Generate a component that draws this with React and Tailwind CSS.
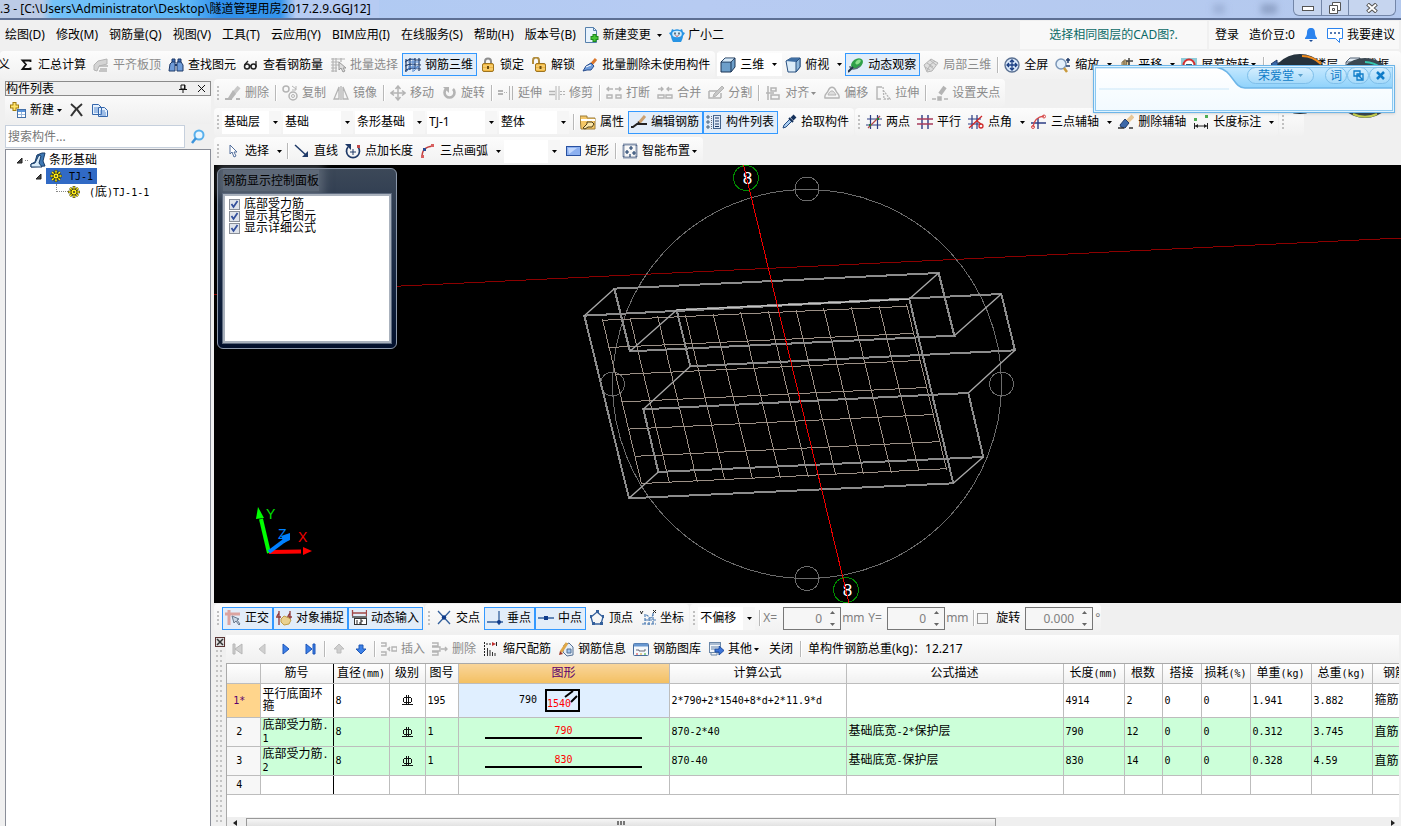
import React from "react";

const N = "#1f3a68";
const G = "#b4b4b4";

function Svg({ children, w = 16 }) {
  return (
    <svg width={w} height="16" viewBox={`0 0 ${w} 16`} fill="none" aria-hidden="true" className="shrink-0">
      {children}
    </svg>
  );
}

function Arrow() {
  return (
    <svg width="5" height="3" viewBox="0 0 5 3" aria-hidden="true" className="shrink-0 fill-current">
      <path d="M0 0h5L2.500 3z" />
    </svg>
  );
}

const icons = {
  sum: <path d="M12.5 5V3.500H4.500l3.500 4-3.500 4.500h8v-1.500" stroke="#111" strokeWidth="1.800" />,
  slab: <><path d="M1 8l4-4 9-2v5l-8 2-2 5-3-1z" fill="#d4d4d4" stroke={G} /><path d="M6 9h9M7 12h7M6 14h8" stroke={G} strokeWidth="1.500" /></>,
  binoc: <><path d="M4 2h3v4H4zM10 2h3v4h-3z" fill="#3c6cb4" stroke={N} /><path d="M2 7l2-2h3v9H1zM9 5h4l2 3v6H9z" fill="#6f9cd8" stroke={N} /><path d="M7 8h2" stroke={N} strokeWidth="2" /></>,
  glasses: <><circle cx="4" cy="9.500" r="2.500" stroke="#222" strokeWidth="1.500" /><circle cx="10.500" cy="9.500" r="2.500" stroke="#222" strokeWidth="1.500" /><path d="M6.500 9h1.500M1.500 8l3.500-4M13 10V4" stroke="#222" strokeWidth="1.300" /></>,
  batch: <><path d="M1 2h14M1 5h8M1 8h8M1 11h6M1 14h6M3 1v14M6 1v14M11 1v4" stroke={G} strokeWidth="1.200" /><path d="M9 5v8l2-2 2 4 2-1-2-3h3z" fill="#ddd" stroke="#999" /></>,
  rebar3d: <><path d="M0 5l5-3 11 1M0 9l5-2 11 1M0 14l5-3 11 1M1 2v13M5 1v12M10 1v11M14 1v13" stroke={N} strokeWidth="1.200" /><path d="M8 2v13M3 5h11M3 10h11M2 14l4-5M9 14l4-5" stroke="#4d80c8" /></>,
  lock: <><path d="M5 7V4.500a3 3 0 016 0V7" stroke="#8d8d8d" strokeWidth="2" /><rect x="2.500" y="6.500" width="11" height="8" rx="1.500" fill="#f1b842" stroke="#9d7420" /><path d="M3 9h10M3 12h10" stroke="#fbdf96" /><path d="M8 9v3" stroke="#6b4a0c" strokeWidth="2" /></>,
  unlock: <><path d="M2 7V3.500a3 3 0 016 0V6" stroke="#b18c3c" strokeWidth="2" /><rect x="4.500" y="6.500" width="10" height="8" rx="1.500" fill="#f1b842" stroke="#9d7420" /><path d="M5 9h9M5 12h9" stroke="#fbdf96" /><path d="M9.500 9v3" stroke="#6b4a0c" strokeWidth="2" /></>,
  brush: <><path d="M14 2L8 9" stroke="#d9772c" strokeWidth="3" /><path d="M9 6l3 3-3 4H5l-4 1 3-5z" fill="#6c9bdc" stroke="#284c8c" /><path d="M4 10l5-2" stroke="#fff" /></>,
  brush2: <><path d="M15 2L9 8" stroke="#e8c898" strokeWidth="4" /><path d="M7 5l4 4-4 5-4-1-1-2z" fill="#3c68a8" stroke={N} /><path d="M0 14h6M11 14h4" stroke="#333" strokeWidth="1.500" /></>,
  grayBrush: <><path d="M14 2L9 8" stroke="#c8c8c8" strokeWidth="4" /><path d="M8 5l3 4-4 5-4-1z" fill="#b7b7b7" /><path d="M0 14h7M11 14h4" stroke={G} strokeWidth="2" /></>,
  cube: <><path d="M1 5l4-4h10v9l-4 5H1z" fill="#6d9fca" stroke="#1c3454" /><path d="M1 5h10v10M11 5l4-4" stroke="#1c3454" /><path d="M2 4.500L5 1.500h9l-3 3z" fill="#d6e8f6" /></>,
  topCube: <><path d="M1 4l5-3h9v9l-4 5H3z" fill="#dcecf8" stroke="#285080" /><path d="M1 4l5-3h9l-4 4z" fill="#3f6fa4" /><path d="M11 5l4-4v9l-4 5z" fill="#8fb8dc" stroke="#285080" /></>,
  orbit: <><ellipse cx="9" cy="6.500" rx="6.500" ry="4.500" fill="#2fa048" transform="rotate(-35 9 6.500)" /><ellipse cx="10" cy="5" rx="3" ry="1.800" fill="#8ae08c" transform="rotate(-35 10 5)" /><path d="M2 9c0 4 6 4 10 0" stroke="#5c6c7c" strokeWidth="1.500" /><path d="M0 15l5-5" stroke="#24364c" strokeWidth="2" /></>,
  local3d: <><path d="M1 8l7-6 7 4-6 8-5 1z" fill="#dedede" stroke={G} /><path d="M4 6l6 4M7 3l6 5M4 14l3-6 5-4M2 10l5 3M11 12l-4-3" stroke={G} /></>,
  full: <><circle cx="8" cy="8" r="7" fill="#dbe9fa" stroke="#5b7192" strokeWidth="1.400" /><path d="M8 3v10M3 8h10M6 5l2-2 2 2M6 11l2 2 2-2M5 6L3 8l2 2M11 6l2 2-2 2" stroke="#1b3f84" strokeWidth="1.300" /></>,
  zoom: <><circle cx="6" cy="7" r="5" fill="#e4f0fb" stroke="#7c97b8" strokeWidth="1.500" /><path d="M9 11l3 4" stroke="#c99a3c" strokeWidth="2.500" /><path d="M13 1v5M11 3h4M11 9h4" stroke={N} strokeWidth="1.500" /></>,
  pan: <><path d="M3 14L1 9l3 1V5l2-1v4-5h2v5l1-4 2 1v6l-2 5z" fill="#ead09c" stroke="#7c6c4c" /><path d="M11 1v7M8 4h7" stroke="#444" strokeWidth="1.500" /></>,
  rotScreen: <><rect x="0" y="1" width="16" height="14" fill="#90cbd8" /><circle cx="8" cy="8" r="5.500" fill="#fff" stroke="#d23030" strokeWidth="2" /><path d="M5 8h6" stroke="#367" strokeWidth="2" /></>,
  floor: <path d="M1 7l6-4v3h8v3H7v3z" fill="#3867a8" stroke={N} />,
  wire: <><path d="M1 5l4-4h10v9l-4 5H1z" fill="#e2eaf2" stroke="#526274" /><path d="M1 5h10v10M11 5l4-4" stroke="#526274" /></>,
  copyG: <><circle cx="4" cy="4" r="3" stroke={G} strokeWidth="1.500" /><circle cx="11" cy="11" r="4" stroke={G} strokeWidth="1.500" /><circle cx="11" cy="11" r="1.500" stroke={G} /><path d="M10 1l4 3M14 1v4h-4" stroke={G} /></>,
  mirror: <path d="M6 2v12H1zM10 2v12h5zM8 1v14" stroke={G} strokeWidth="1.300" />,
  move: <path d="M8 1v14M1 8h14M5.500 4L8 1l2.500 3M5.500 12L8 15l2.500-3M4 5.500L1 8l3 2.500M12 5.500L15 8l-3 2.500" stroke={G} strokeWidth="1.500" />,
  rotate: <><path d="M5 4a5 5 0 107 0" stroke={G} strokeWidth="2.600" /><path d="M2 2h6v6z" fill={G} /></>,
  extend: <><path d="M0 6h5M0 9h5" stroke={G} strokeWidth="2" /><path d="M6 7.500h4" stroke={G} strokeDasharray="1 1" /><path d="M11.500 1v14M14.500 1v14" stroke={G} /></>,
  trim: <><path d="M7 1v14M10 1v14" stroke={G} /><path d="M0 6.500h6M0 9.500h6" stroke={G} strokeWidth="1.500" /><path d="M11 6.500h5M11 9.500h5" stroke={G} strokeDasharray="2 1" /></>,
  split1: <path d="M1 4h6M9 4h6M3 2L1 4l2 2M13 2l2 2-2 2M1 10h5v3H1zM10 10h5v3h-5z" stroke={G} strokeWidth="1.400" />,
  merge: <path d="M1 4h5M10 4h5M4 2l2 2-2 2M12 2l-2 2 2 2M1 10h6v3H1zM9 10h6v3H9z" stroke={G} strokeWidth="1.400" />,
  divide: <><path d="M1 6h9M1 6v7h12M13 8v5" stroke={G} strokeWidth="1.500" /><path d="M14 1l2 2-8 8-3 1 1-3z" fill="#c8c8c8" stroke={G} /></>,
  align: <path d="M3 1v14M6 3h5v3H6zM6 10h8v4H6zM1 8h8" stroke={G} strokeWidth="1.500" />,
  offset: <><path d="M1 13c-1-4 2-4 3-7 2-5 6-5 8 0 1 3 4 3 3 7z" stroke={G} strokeWidth="1.400" /><path d="M4 10c1-3 2-3 3-4h2c1 1 2 2 3 4z" fill="#ddd" stroke={G} /></>,
  stretch: <><path d="M7 2H2v12h4" stroke={G} strokeWidth="1.400" /><path d="M8 2l1 12h6L8 5" stroke={G} strokeWidth="1.300" strokeDasharray="2 1" /></>,
  grip: <><path d="M13 2L8 9" stroke="#b4b4b4" strokeWidth="4" /><path d="M0 14h4M12 14h4M6 12h3v3H6z" stroke={G} fill={G} strokeWidth="1.500" /></>,
  prop: <><path d="M0 2h7v2h8v11H1z" fill="#f5c766" stroke="#9c7c38" /><path d="M1 6h14" stroke="#fff" strokeWidth="2" /><path d="M3 14l4-4V8h5l2 2-2 3H8l-3 2z" fill="#fbe6a8" stroke="#4c3c18" /></>,
  editBar: <><path d="M14 2L8 9" stroke="#caa070" strokeWidth="3" /><path d="M0 13h2l4-3h10" stroke="#222" strokeWidth="2" /><path d="M6 11l1-4 3 3z" fill="#222" /></>,
  list: <><path d="M1 2h2v2H1zM1 7h2v2H1zM1 12h2v2H1z" stroke="#45607c" /><path d="M5.500 2v13" stroke="#667" strokeDasharray="1 1" /><rect x="7.500" y="1.500" width="7" height="13" fill="#dfe9f6" stroke="#44658f" /><path d="M9 4h4M9 7h4M9 10h4M9 12.500h4" stroke={N} /></>,
  picker: <><path d="M2 14l1-3 6-6 2 2-6 6z" fill="#aacdf0" stroke="#234c84" /><path d="M8 4l4 4" stroke="#16325c" strokeWidth="2" /><path d="M14 2l-3 3" stroke="#16325c" strokeWidth="4" /></>,
  twoPt: <><path d="M4.500 1v14M11.500 1v14M0 11h15M1 5h15" stroke="#2c3c84" strokeWidth="1.200" /><path d="M2 14L14 2" stroke="#b04848" strokeWidth="1.300" /><path d="M11 4h2v2h-2zM3 10h2v2H3z" fill="#208030" /></>,
  para: <><path d="M5 1v14M11 1v14" stroke="#2c3c84" strokeWidth="1.400" /><path d="M0 5h16M0 10h16" stroke="#a83c5c" strokeWidth="1.400" /></>,
  angle: <><path d="M4 1v14M9 1v14M0 10h12M0 5h13" stroke="#2c3c84" strokeWidth="1.200" /><path d="M1 14L14 2M9 7l4 3" stroke="#d02828" strokeWidth="1.300" /><circle cx="13" cy="12" r="2" stroke="#d02828" strokeWidth="1.300" /></>,
  three: <><path d="M0 9h15M7 4v11" stroke="#2c3c84" strokeWidth="1.400" /><path d="M2 13C3 6 6 3 13 2" stroke="#d84848" strokeWidth="1.500" /><circle cx="13" cy="2.500" r="1.500" stroke="#d84848" /><circle cx="2" cy="13" r="1.500" stroke="#d84848" /></>,
  dim: <><path d="M1 4h3v3H1zM12 1h3v3h-3z" fill="#4fae55" /><path d="M1.500 9v6M14.500 9v6M2 12h12" stroke="#222" /><path d="M2 12l3-2v4zM14 12l-3-2v4z" fill="#222" /></>,
  cursor: <path d="M5 2v9l2-2 2 5 2-1-2-4h3z" fill="#fff" stroke="#536f9c" />,
  line: <><path d="M1 2l12 11" stroke={N} strokeWidth="1.500" /><path d="M14 14V8l-6 6z" fill={N} /></>,
  ptLen: <><path d="M3 4a6.500 6.500 0 1010 0" stroke={N} strokeWidth="1.700" /><path d="M0 1h6v6z" fill={N} /><path d="M8 6v6M5 9h6" stroke={N} /><path d="M12 2h3v3h-3z" fill="#c04848" /></>,
  arc: <><path d="M2 14C2 7 5 4 13 3" stroke="#c04040" strokeWidth="1.500" /><path d="M11 1h3v3h-3zM1 12h3v3H1z" fill="#d86060" /><path d="M3 5h3v3H3z" fill="#2c4c94" /></>,
  rect: <><rect x="1.500" y="3.500" width="14" height="9" fill="#8cb0f0" stroke="#2850a0" /><path d="M3 5h9l-8 6z" fill="#c0d6fc" /></>,
  smart: <><rect x="1.500" y="1.500" width="13" height="13" stroke={N} strokeDasharray="1 1" strokeWidth="2" /><path d="M9 3v4M7 5h4M5 7v4M3 9h4M12 8v4M10 10h4M8 11v3" stroke="#20406c" strokeWidth="1.200" /></>,
  ortho: <><path d="M0 4h15M4 0v15" stroke="#dba4a0" strokeWidth="3" /><path d="M7 6l2 7 2-2 3 4 1-1-3-4 2-1z" fill="#c8d6e4" stroke="#67788c" /></>,
  snap: <><path d="M3 1v14M14 1v8M0 7h5M11 7h5M3 3l-2 3M14 3l-2 3" stroke="#903838" strokeWidth="1.300" /><path d="M5 9l3-3 5 2 2 2-2 4-5 1-3-3z" fill="#ead290" stroke="#c09c48" /></>,
  dyn: <><path d="M1.500 0v6M15.500 0v6M1 3h14" stroke="#a04848" strokeWidth="1.300" /><path d="M1 7h15" stroke="#444" strokeWidth="1.500" /><rect x="3.500" y="8.500" width="12" height="6" fill="#fff" stroke="#333" /><path d="M6 10v4M9 10h2v2H9v2h2" stroke="#222" /></>,
  cross: <><path d="M2 1l12 13M14 1L2 14" stroke="#34609c" strokeWidth="1.300" /><circle cx="8" cy="7.500" r="2.200" fill="#103c8c" /></>,
  perp: <><path d="M12 1v14M0 12h16" stroke="#34609c" strokeWidth="1.300" /><circle cx="12" cy="12" r="2" fill="#103c8c" /></>,
  mid: <><path d="M0 8h16" stroke="#34609c" strokeWidth="1.500" /><rect x="6" y="6" width="4" height="4" fill="#103c8c" /></>,
  vertex: <><path d="M8 2l6 5-2 7H4L2 7z" stroke="#34609c" strokeWidth="1.300" /><path d="M7 0h3v3H7zM13 5h2v3h-2zM1 5h2v3H1zM3 12h3v3H3zM11 12h3v3h-3z" fill="#34609c" /></>,
  coord: <><path d="M5 4v10h11M2 14h3M5 10h11M9 8v7M13 3v12M6 5c3 0 2 3 4 3s3-3 3-4" stroke="#4c7cb4" strokeWidth="1.200" strokeDasharray="3 1" /><path d="M0 1l2 3M3 1L1 4M13 0l3 3M16 0l-3 3" stroke="#222" /></>,
  insert: <path d="M0 2h5v3H0M0 11h5v3H0M6 8h3M11 6h5v4h-5zM9 6L7 8l2 2" stroke={G} strokeWidth="1.400" />,
  del: <path d="M0 2h6v3H0M0 11h6v3H0M0 6h8v4H0M9 8h6M13 6l2 2-2 2" stroke={G} strokeWidth="1.400" />,
  scale: <><path d="M1.500 1v14M3 3h8" stroke="#222" strokeDasharray="2 1" /><path d="M9 1l4 2-4 2z" fill="#c03030" /><path d="M13.500 1v4" stroke="#222" /><path d="M4.500 7v8M7 9v6M9.500 11v4M12 12v3" stroke="#333" /></>,
  info: <><path d="M6 4l5-2 4 4v8l-6 1-4-4z" fill="#e3edf8" stroke="#557094" /><path d="M9 2L3 11" stroke="#e0a848" strokeWidth="3" /><path d="M1 14l1-4 3 3z" fill="#a03828" /><path d="M9 8h4v4H9z" fill="#a0c4ec" stroke="#557094" /></>,
  lib: <><rect x=".5" y="2.500" width="15" height="12" rx="1" fill="#f4f8fc" stroke="#486c9c" /><path d="M1 4h14" stroke="#6797d0" strokeWidth="3" /><path d="M3 9h3v1h6V8" stroke="#667" /><path d="M3 13h2" stroke="#d33" /><path d="M7 13h2" stroke="#da3" /><path d="M11 13h2" stroke="#3a3" /></>,
  other: <><rect x="1.500" y="1.500" width="11" height="10" fill="#f3f7fb" stroke="#6c88a8" /><path d="M1 3h12M3 6h7M3 8h4" stroke="#6080a8" /><path d="M3 11v3h6v-3" stroke="#6c88a8" /><path d="M7 8h4V5l5 4.500L11 14v-3H7z" fill="#3c74d8" stroke="#1c4ca0" /></>,
  newDoc: <><path d="M1.500.5h8l3 3v12h-11z" fill="#e8f3fd" stroke="#5680ac" /><path d="M9.500.5v3h3" stroke="#5680ac" /><path d="M10.500 7v8M6.500 11h8" stroke="#1d8a1d" strokeWidth="4" /><path d="M10.500 8v6M7.500 11h6" stroke="#46c436" strokeWidth="2" /></>,
  mascot: <><path d="M3 2l2 1c2-1 4-1 6 0l2-1 1 3 2 1-2 3c0 2-1 4-2 6H4C3 13 2 11 2 9L0 6l2-1z" fill="#2894e4" /><ellipse cx="8" cy="7" rx="4.800" ry="3.300" fill="#d2ecfc" /><path d="M6 5.500v2M10 5.500v2" stroke="#123" strokeWidth="1.200" /><path d="M6.500 8.500c1 1 2 1 3 0" stroke="#c44" /></>,
  first: <path d="M3 3h2v10H3zM12 3v10L5 8z" fill="#d0d0d0" stroke="#b6b6b6" />,
  prev: <path d="M11 3v10L5 8z" fill="#d0d0d0" stroke="#c0c0c0" />,
  next: <path d="M5 3v10l6-5z" fill="#3c80e8" stroke="#1c54b8" />,
  last: <path d="M4 3v10l6-5zM11 3h2v10h-2z" fill="#3c80e8" stroke="#1c54b8" />,
  up: <path d="M8 3l5 5h-3v4H6V8H3z" fill="#cfcfcf" stroke="#bdbdbd" />,
  down: <path d="M8 13l5-5h-3V4H6v4H3z" fill="#3c80e8" stroke="#2058b4" />,
};

function Tool({ icon, text, on, off, split, menu }) {
  return (
    <span className="flex shrink-0 items-center">
      <button
        type="button"
        disabled={off}
        className={
          "flex h-[23px] items-center gap-1 border pr-[3px] pl-[2px] whitespace-nowrap " +
          (on ? "border-[#3399ff] bg-[#e2edf9] " : "border-transparent ") +
          (off ? "text-[#8c8c8c]" : "text-black")
        }
      >
        <Svg>{icons[icon]}</Svg>
        <span>{text}</span>
        {menu && <span className="-ml-1 flex w-2 justify-center"><Arrow /></span>}
      </button>
      {split && (
        <button type="button" aria-label={text + " 选项"} className="flex h-[23px] w-3 items-center justify-center">
          <Arrow />
        </button>
      )}
    </span>
  );
}

const Sep = () => <span className="mx-[2px] h-4 w-[2px] shrink-0 border-l border-[#b8b8b8] bg-white" />;

const Grip = () => (
  <svg width="3" height="15" viewBox="0 0 3 15" aria-hidden="true" className="mr-[2px] ml-[3px] shrink-0">
    <path d="M0 0h2v2H0zM0 4h2v2H0zM0 8h2v2H0zM0 12h2v2H0z" fill="#c0c0c0" />
  </svg>
);

function Strip({ children, grow }) {
  return (
    <div className={"flex h-7 shrink-0 items-center rounded-sm bg-linear-to-b from-[#fcfcfc] to-[#f1f1f1] pr-[1px] " + (grow ? "grow" : "")}>
      {children}
    </div>
  );
}

function Combo({ label, value, wide = "w-[70px]" }) {
  return (
    <span className={"relative mr-[2px] flex h-[23px] shrink-0 items-center bg-white " + wide}>
      <select aria-label={label} defaultValue={value} className="h-full w-full appearance-none bg-white pl-[2px] text-xs text-black">
        <option>{value}</option>
      </select>
      <span className="pointer-events-none absolute inset-y-0 right-0 flex w-3 items-center justify-center bg-[#f6f6f6]"><Arrow /></span>
    </span>
  );
}

function Spin({ label, value, wide = "w-[58px]" }) {
  return (
    <span className={"flex h-[23px] shrink-0 items-center border border-[#777] bg-[#f6f6f6] " + wide}>
      <input aria-label={label} defaultValue={value} className="h-full w-full min-w-0 bg-transparent pr-[2px] text-right text-xs text-[#808080]" />
      <span className="flex h-full w-4 shrink-0 flex-col items-center justify-between py-[3px] text-[#666]">
        <svg width="5" height="3" viewBox="0 0 5 3" aria-hidden="true"><path d="M0 3h5L2.500 0z" fill="currentColor" /></svg>
        <svg width="5" height="3" viewBox="0 0 5 3" aria-hidden="true"><path d="M0 0h5L2.500 3z" fill="currentColor" /></svg>
      </span>
    </span>
  );
}

/* Latin runs sit in a narrow monospace beside full-width characters. */
function Mixed({ children }) {
  return children.split(/([\x20-\x7e]+)/).filter(Boolean).map((part, i) =>
    /^[\x20-\x7e]/.test(part)
      ? <span key={i} className="font-['DejaVu_Sans_Mono',monospace] text-[10px]">{part}</span>
      : part
  );
}

function TitleBar() {
  return (
    <header className="flex h-5 shrink-0 items-start justify-between border-b-2 border-[#5d6f93] bg-linear-to-r from-[#a9c9f3] via-[#b7cbf2] to-[#b4c9ee]">
      <h1 className="h-[18px] overflow-hidden bg-[linear-gradient(to_right,#bccbe6_11%,#74c2f8_14%,#5cb6f6_50%,#2f8eea_58%,#3494ec_74%,#b6cbf2_78%)] pr-2 text-xs leading-[18px] whitespace-nowrap">
        .3 - [C:\Users\Administrator\Desktop\隧道管理用房2017.2.9.GGJ12]
      </h1>
      <div className="flex items-start">
        <div aria-hidden="true" className="mr-4 flex gap-9 pt-1 blur-[3px]">
          <span className="h-[10px] w-3 bg-[#8a9ec4]/50" />
          <span className="h-[10px] w-4 bg-[#7688ae]/60" />
        </div>
        <div className="mr-[5px] flex h-4 rounded-b-md border border-t-0 border-[#7386a8] bg-[#c6d5ef]">
          <button type="button" aria-label="最小化" className="flex w-7 items-center justify-center border-r border-[#7386a8]">
            <svg width="12" height="6" viewBox="0 0 12 6"><rect x=".5" y="1.500" width="11" height="4" fill="#fff" stroke="#555" /></svg>
          </button>
          <button type="button" aria-label="还原" className="flex w-[27px] items-center justify-center border-r border-[#7386a8]">
            <svg width="12" height="12" viewBox="0 0 12 12" fill="#fff" stroke="#555"><path d="M3.500.5h8v8h-8z" /><path d="M.5 3.500h8v8h-8zM3.500 6.500h2v2h-2z" /></svg>
          </button>
          <button type="button" aria-label="关闭窗口" className="flex w-[46px] items-center justify-center">
            <svg width="12" height="10" viewBox="0 0 12 10"><path d="M1.500 1l9 8M10.500 1l-9 8" stroke="#555" strokeWidth="4" /><path d="M2 1.500l8 7M10 1.500l-8 7" stroke="#fff" strokeWidth="2" /></svg>
          </button>
        </div>
      </div>
    </header>
  );
}

const menus = ["绘图(D)", "修改(M)", "钢筋量(Q)", "视图(V)", "工具(T)", "云应用(Y)", "BIM应用(I)", "在线服务(S)", "帮助(H)", "版本号(B)"];

function MenuBar() {
  return (
    <nav className="flex h-[30px] shrink-0 items-center justify-between whitespace-nowrap">
      <div className="flex items-center pl-[5px]">
        <div className="flex gap-[11px]">
          {menus.map((m) => <button type="button" key={m}>{m}</button>)}
        </div>
        <div className="ml-2 flex items-center">
          <button type="button" className="flex items-center gap-[3px]"><Svg>{icons.newDoc}</Svg>新建变更</button>
          <button type="button" aria-label="新建变更 选项" className="flex w-[18px] justify-center"><Arrow /></button>
          <button type="button" className="flex items-center gap-[3px]"><Svg>{icons.mascot}</Svg>广小二</button>
        </div>
      </div>
      <div className="flex gap-[2px] pr-[2px]">
        <div className="flex h-7 w-[187px] items-center justify-center bg-[#f8f8f8] text-[#0b6a66]">选择相同图层的CAD图?.</div>
        <div className="flex h-7 items-center bg-[#f8f8f8] pr-1 pl-[6px]">
          <button type="button" className="mr-[10px]">登录</button>
          <button type="button" className="mr-2">造价豆:0</button>
          <button type="button" aria-label="通知" className="mr-2">
            <Svg><path d="M8 1c3 0 4 2 4 5 0 2 1 4 2 5v1H2v-1c1-1 2-3 2-5 0-3 1-5 4-5z" fill="#2b83ee" /><path d="M6 13h4l-2 2z" fill="#1b4c98" /></Svg>
          </button>
          <button type="button" className="flex items-center gap-1">
            <Svg><path d="M.5 1.500h15v10h-3v4l-4-4h-8z" stroke="#2b83ee" fill="#fff" /><path d="M3 6h2M7 6h2M11 6h2" stroke="#1b4c98" strokeWidth="1.500" /></Svg>
            我要建议
          </button>
        </div>
      </div>
    </nav>
  );
}

function MainTools() {
  return (
    <div className="flex h-[29px] shrink-0 items-center gap-[2px] overflow-hidden">
      <Strip>
        <button type="button" className="-ml-[2px] w-[17px] text-left">义</button>
        <Tool icon="sum" text="汇总计算" />
        <Tool icon="slab" text="平齐板顶" off />
        <Tool icon="binoc" text="查找图元" />
        <Tool icon="glasses" text="查看钢筋量" />
        <Tool icon="batch" text="批量选择" off />
        <Tool icon="rebar3d" text="钢筋三维" on />
        <Tool icon="lock" text="锁定" />
        <Tool icon="unlock" text="解锁" />
        <Tool icon="brush" text="批量删除未使用构件" />
      </Strip>
      <Strip grow>
        <span className="flex bg-white pr-[2px]"><Tool icon="cube" text="三维" split /></span>
        <Tool icon="topCube" text="俯视" split />
        <Tool icon="orbit" text="动态观察" on />
        <Tool icon="local3d" text="局部三维" off />
        <Sep />
        <Tool icon="full" text="全屏" />
        <Tool icon="zoom" text="缩放" split />
        <Tool icon="pan" text="平移" split />
        <Tool icon="rotScreen" text="屏幕旋转" menu />
        <Sep />
        <Tool icon="floor" text="选择楼层" />
        <Tool icon="wire" text="线框" />
      </Strip>
    </div>
  );
}

function Sun() {
  return (
    <svg width="12" height="12" viewBox="0 0 12 12" aria-hidden="true" className="shrink-0">
      <path d="M6 0v12M0 6h12M2 2l8 8M10 2l-8 8" stroke="#2a2a00" strokeWidth="2.600" />
      <path d="M6 .5v11M.5 6h11M2 2l8 8M10 2l-8 8" stroke="#ffee20" strokeWidth="1.500" />
      <circle cx="6" cy="6" r="3" fill="#ffee20" stroke="#555000" />
      <circle cx="6" cy="6" r="1" fill="#333" />
    </svg>
  );
}

const Twisty = () => (
  <svg width="7" height="7" viewBox="0 0 7 7" aria-hidden="true" className="shrink-0"><path d="M6 1v5H1z" fill="#444" stroke="#222" /></svg>
);

function ComponentList() {
  return (
    <aside className="flex w-[211px] shrink-0 flex-col pt-[2px] pl-[5px]">
      <div className="flex h-[15px] items-center justify-between border border-[#8a8a8a] bg-[#efefef]">
        <h2 className="text-xs leading-3">构件列表</h2>
        <div className="flex items-center gap-[10px] pr-1">
          <button type="button" aria-label="固定"><svg width="8" height="9" viewBox="0 0 8 9"><path d="M2 1h4v4H2zM0 5.500h8M4 6v3M5.500 1v4" fill="none" stroke="#111" /></svg></button>
          <button type="button" aria-label="关闭列表"><svg width="9" height="9" viewBox="0 0 9 9"><path d="M1 1l7 7M8 1L1 8" stroke="#111" /></svg></button>
        </div>
      </div>
      <div className="flex h-7 items-center bg-linear-to-b from-[#fafafa] to-[#efefef] pl-[5px]">
        <button type="button" className="flex items-center gap-1">
          <Svg><path d="M4.500 0v9M0 4.500h9" stroke="#a07c10" strokeWidth="4" /><path d="M4.500 1v7M1 4.500h7" stroke="#ffe46a" strokeWidth="2" /><rect x="7.500" y="7.500" width="8" height="8" fill="#fff" stroke="#4470a8" /><path d="M8 9h7" stroke="#5a94dc" strokeWidth="2" /><path d="M8 12.500h7M11.500 10v5" stroke="#9ab8dc" /></Svg>
          新建
          <span className="-ml-[1px]"><Arrow /></span>
        </button>
        <button type="button" aria-label="删除构件" className="ml-[7px]"><Svg><path d="M2 2c4 3 8 7 11 12M13 2C9 5 5 9 2 14" stroke="#333" strokeWidth="2" /></Svg></button>
        <button type="button" aria-label="复制构件" className="ml-[7px]"><Svg><path d="M.5 2.500h6l3 3v7h-9zM6.500 5.500h6l3 3v6h-9z" fill="#e6f1fd" stroke="#3466ac" /><path d="M2 6h4M2 8h4M2 10h4M8 9h5M8 11h6M8 13h6" stroke="#5a8cd0" /></Svg></button>
      </div>
      <div className="flex h-[25px] items-center">
        <input aria-label="搜索构件" placeholder="搜索构件..." className="h-[23px] w-0 grow border border-[#c6d0dd] bg-white pl-[2px] text-xs placeholder:text-[#777]" />
        <button type="button" aria-label="搜索" className="flex w-[26px] justify-center"><Svg><circle cx="9" cy="6" r="4.500" fill="#e8f6ff" stroke="#58b0ec" strokeWidth="2" /><path d="M6 9l-4 5" stroke="#3c94dc" strokeWidth="2.500" /></Svg></button>
      </div>
      <div className="grow border border-b-0 border-[#8a8e98] bg-white pt-[2px]">
        <div className="flex h-4 items-center pl-[10px]">
          <Twisty />
          <span className="mx-[2px] w-[3px] border-t border-dotted border-[#888]" />
          <Svg><path d="M1 15v-3l4-2 2-7 5-2h3l-2 8 2 5z" fill="#3e78b4" stroke="#183c68" /><path d="M1 15v-3l4-1 4-8 2 1-2 7 3 4z" fill="#d8ebf8" stroke="#183c68" /></Svg>
          <span className="ml-[3px]">条形基础</span>
        </div>
        <div className="flex h-4 items-center pl-[29px]">
          <Twisty />
          <span className="ml-1 flex h-4 w-[51px] items-center gap-[7px] bg-[#316ac5] pl-1"><Sun /><span><Mixed>TJ-1</Mixed></span></span>
        </div>
        <div className="flex h-4 items-center pl-[50px]">
          <span className="h-2 w-3 self-start border-b border-l border-dotted border-[#888]" />
          <Sun />
          <span className="ml-[9px]"><Mixed>(底)TJ-1-1</Mixed></span>
        </div>
      </div>
    </aside>
  );
}

const rows12 = Array.from({ length: 12 }, (_, i) => i);
const rows7 = rows12.slice(0, 7);

function Scene() {
  return (
    <svg viewBox="214 165 1187 438" preserveAspectRatio="xMidYMid slice" className="absolute inset-0 h-full w-full" role="img" aria-label="钢筋三维">
      <g fill="none" shapeRendering="crispEdges">
        <path d="M214 295L1401 238" stroke="#8c0000" />
        <circle cx="807" cy="384" r="194.500" stroke="#6c6c6c" />
        <g stroke="#6c6c6c">
          <circle cx="807" cy="189" r="12" /><circle cx="807" cy="578.500" r="12" />
          <circle cx="612.500" cy="384" r="12" /><circle cx="1001.500" cy="384" r="12" />
        </g>
      </g>
      <g transform="translate(570 165) scale(.3333)" fill="none">
        <g stroke="#9c9086" strokeWidth="3" shapeRendering="crispEdges">
          {rows12.map((i) => <path key={i} d={`M${97 + 83 * i} ${462 - 4 * i}L${215 + 83.2 * i} ${958 - 3.9 * i}`} />)}
          {rows7.map((i) => <path key={i} d={`M${95 + 20 * i} ${466 + 81.6 * i}L${1012 + 19.4 * i} ${424 + 81.2 * i}`} />)}
        </g>
        <g stroke="#8c8c8c" strokeWidth="6" shapeRendering="crispEdges">
          <path d="M43 452L1018 402L1150 955L177 1000Z" />
          <path d="M133 371L1106 324L1153 512L180 559Z" />
          <path d="M320 435L1294 387L1335 556L361 604Z" />
          <path d="M220 733L1195 684L1240 876L265 921Z" />
        </g>
        <path d="M43 452L133 371M1018 402L1106 324M180 559L320 435M1153 512L1294 387M361 604L220 733M1335 556L1195 684M265 921L177 1000M1240 876L1150 955" stroke="#a8a8a8" strokeWidth="4" />
        <path d="M320 435L1018 402" stroke="#c4c4c4" strokeWidth="3" shapeRendering="crispEdges" />
      </g>
      <g fill="#fff" fontFamily="'Liberation Sans', sans-serif" fontSize="17" textAnchor="middle">
        <text x="747.500" y="184">8</text>
        <text x="847.500" y="596">8</text>
      </g>
      <g fill="none" stroke="#008c00" shapeRendering="crispEdges"><circle cx="746" cy="178" r="12.500" /><circle cx="846" cy="590" r="12.500" /></g>
      <path d="M743.500 165L849 603" stroke="#f00000" shapeRendering="crispEdges" />
      <path d="M269 553L261 519" stroke="#00ff00" strokeWidth="4" /><path d="M258 507L264 518L256 519Z" fill="#00ff00" />
      <path d="M269 552L301 551.500" stroke="#ff0000" strokeWidth="4" /><path d="M303 547L312 551L303 555Z" fill="#ff0000" />
      <path d="M269 552L285 540" stroke="#0080ff" strokeWidth="4" /><path d="M281 536L290 533V540L284 543Z" fill="#0080ff" />
      <g fontFamily="'Liberation Sans', sans-serif" fontSize="14">
        <text x="266" y="519" fill="#00e000">Y</text>
        <text x="278" y="539" fill="#0080ff">Z</text>
        <text x="298" y="542" fill="#f00000">X</text>
      </g>
    </svg>
  );
}

const checks = ["底部受力筋", "显示其它图元", "显示详细公式"];

function Viewport() {
  return (
    <main className="relative min-h-0 grow overflow-hidden bg-black">
      <Scene />
      <section className="absolute top-[3px] left-[3px] flex h-[181px] w-[180px] flex-col rounded-md border border-[#8d99ab] bg-linear-to-b from-[#3c4858] via-[#1b2b45] to-[#03102c] p-[5px] pt-0">
        <h2 className="h-[25px] text-xs leading-6"><span className="bg-[#77818e]/60 py-[2px] text-black shadow-[0_0_8px_5px_rgba(119,129,142,0.5)]">钢筋显示控制面板</span></h2>
        <div className="grow border-2 border-double border-[#aab2bd] bg-white pt-[2px] pl-[4px] outline outline-[#5d6a7e]">
          {checks.map((c) => (
            <label key={c} className="flex h-3 items-center gap-1 leading-3">
              <input type="checkbox" defaultChecked className="peer sr-only" />
              <svg width="11" height="11" viewBox="0 0 11 11" aria-hidden="true"><rect x=".5" y=".5" width="10" height="10" fill="#dfe3ea" stroke="#8a8f98" /><path d="M2.500 5l2 3 4-6" fill="none" stroke="#34509c" strokeWidth="1.800" /></svg>
              {c}
            </label>
          ))}
        </div>
      </section>
    </main>
  );
}

function SnapBar() {
  return (
    <div className="flex h-8 shrink-0 items-center gap-[1px] overflow-hidden pb-[2px] whitespace-nowrap">
      <Strip>
        <Grip />
        <Tool icon="ortho" text="正交" on /><Tool icon="snap" text="对象捕捉" on /><Tool icon="dyn" text="动态输入" on />
      </Strip>
      <Strip>
        <Grip />
        <Tool icon="cross" text="交点" /><Tool icon="perp" text="垂点" on /><Tool icon="mid" text="中点" on />
        <Tool icon="vertex" text="顶点" /><Tool icon="coord" text="坐标" />
      </Strip>
      <Strip>
        <Grip />
        <Combo label="偏移方式" value="不偏移" wide="w-[57px]" />
        <Sep />
        <span className="w-[20px] text-[#808080]">X=</span>
        <Spin label="X 偏移" value="0" />
        <span className="w-[26px] pl-[1px] text-[#808080]">mm</span>
        <span className="w-[20px] pl-[1px] text-[#808080]">Y=</span>
        <Spin label="Y 偏移" value="0" />
        <span className="w-[26px] pl-[1px] text-[#808080]">mm</span>
        <Sep />
        <label className="flex items-center gap-2 pr-[5px]"><input type="checkbox" className="h-[11px] w-[11px] appearance-none border border-[#999] bg-[#f6f6f6]" />旋转</label>
        <Spin label="旋转角度" value="0.000" wide="w-[68px]" />
        <span className="pl-[2px] text-[#808080]">°</span>
      </Strip>
    </div>
  );
}

const cols = [
  ["", "w-[33px]"], ["筋号", "w-[73px]"], ["直径(mm)", "w-[56px]"], ["级别", "w-[36px]"], ["图号", "w-[33px]"],
  ["图形", "w-[211px]"], ["计算公式", "w-[177px]"], ["公式描述", "w-[217px]"], ["长度(mm)", "w-[61px]"], ["根数", "w-[38px]"],
  ["搭接", "w-[39px]"], ["损耗(%)", "w-[49px]"], ["单重(kg)", "w-[61px]"], ["总重(kg)", "w-[61px]"], ["钢筋归类", "w-[70px]"],
];

const Grade = () => (
  <svg width="11" height="10" viewBox="0 0 11 10" fill="none" stroke="#111" shapeRendering="crispEdges" className="mx-auto" role="img" aria-label="HRB400">
    <path d="M4.500 0v9M6.500 0v9M0 9.500h11M2 2.500h7M2 7.500h7M1.500 3v4M9.500 3v4" />
  </svg>
);

const Bar = ({ n }) => (
  <div className="mx-auto w-[157px] border-b-2 border-black text-center leading-3 text-[#f00]"><Mixed>{n}</Mixed></div>
);

const Stirrup = () => (
  <div className="flex items-center justify-center gap-2 pr-7">
    <Mixed>790</Mixed>
    <span className="relative flex h-[23px] w-[35px] items-end border-2 border-black leading-3 text-[#f00]">
      <Mixed>1540</Mixed>
      <svg width="14" height="13" viewBox="0 0 14 13" aria-hidden="true" className="absolute top-0 right-0"><path d="M1 6l8-6M7 11l6-6" stroke="#000" strokeWidth="2" /></svg>
    </span>
  </div>
);

const data = [
  ["平行底面环箍", "8", "@", "195", <Stirrup key="s" />, "2*790+2*1540+8*d+2*11.9*d", "", "4914", "2", "0", "0", "1.941", "3.882", "箍筋"],
  ["底部受力筋.1", "8", "@", "1", <Bar key="b" n="790" />, "870-2*40", "基础底宽-2*保护层", "790", "12", "0", "0", "0.312", "3.745", "直筋"],
  ["底部受力筋.2", "8", "@", "1", <Bar key="b" n="830" />, "870-40", "基础底宽-保护层", "830", "14", "0", "0", "0.328", "4.59", "直筋"],
  Array(14).fill(""),
];
const rowLook = ["h-[34px] bg-white", "h-[29px] bg-[#ccffd9]", "h-[29px] bg-[#ccffd9]", "h-[19px] bg-white"];

function RebarTable() {
  return (
    <div className="h-[154px] overflow-hidden border-t border-l border-[#a9a9a9] bg-white">
      <table className="w-[1215px] table-fixed border-collapse text-xs leading-3">
        <thead>
          <tr className="h-[19px]">
            {cols.map(([name, w], i) => (
              <th key={i} scope="col" className={w + " border-r border-b border-[#bdbdbd] p-0 font-normal whitespace-nowrap " + (i === 5 ? "bg-linear-to-b from-[#f9d599] to-[#f3c062] text-[#5a006e]" : "bg-linear-to-b from-white to-[#f0f0f0]") + (i === 1 ? " border-r-black" : "")}>
                <Mixed>{name}</Mixed>
              </th>
            ))}
          </tr>
        </thead>
        <tbody>
          {data.map((row, r) => (
            <tr key={r} className={rowLook[r]}>
              <th scope="row" className={"border-r border-b border-[#bdbdbd] p-0 pr-2 text-center font-normal " + (r === 0 ? "bg-[#ffd58c] text-[#5a006e]" : "bg-[#f7f7f7]")}>
                <Mixed>{r === 0 ? "1*" : String(r + 1)}</Mixed>
              </th>
              {row.map((cell, c) => (
                <td key={c} className={"border-r border-b border-[#bdbdbd] p-0 break-all " + (c === 2 || c === 4 ? "" : "pl-[2px] ") + (c === 0 ? "border-r-black " : "") + (c === 4 && r === 0 ? "bg-[#e0efff]" : "")}>
                  {cell === "@" ? <Grade /> : typeof cell === "string" ? <Mixed>{cell}</Mixed> : cell}
                </td>
              ))}
            </tr>
          ))}
        </tbody>
      </table>
    </div>
  );
}

function NavBtn({ icon, label, off, wide = "w-6" }) {
  return <button type="button" aria-label={label} disabled={off} className={"flex h-[23px] shrink-0 items-center justify-center " + wide}><Svg>{icons[icon]}</Svg></button>;
}

function DataPanel() {
  return (
    <section className="flex h-[191px] shrink-0 pr-[2px]">
      <div className="flex w-3 shrink-0 flex-col items-center pt-[2px]">
        <button type="button" aria-label="关闭面板"><svg width="10" height="10" viewBox="0 0 10 10"><rect x=".5" y=".5" width="9" height="9" fill="#ddd" stroke="#5a3434" /><path d="M2 2l6 6M8 2L2 8" stroke="#333" strokeWidth="1.500" /></svg></button>
        <svg width="8" height="176" aria-hidden="true">
          <defs><pattern id="dots" width="4" height="10" patternUnits="userSpaceOnUse"><path d="M0 3h2v2H0zM0 8h2v2H0z" fill="#c4c4c4" /></pattern></defs>
          <rect width="8" height="176" fill="url(#dots)" />
        </svg>
      </div>
      <div className="flex min-w-0 grow flex-col">
        <div className="flex h-[28px] shrink-0 items-center overflow-hidden bg-linear-to-b from-[#fdfdfd] to-[#f0f0f0] whitespace-nowrap">
          <NavBtn icon="first" label="首行" off /><NavBtn icon="prev" label="上一行" off /><NavBtn icon="next" label="下一行" /><NavBtn icon="last" label="末行" />
          <Sep />
          <NavBtn icon="up" label="上移" off wide="w-[22px]" /><NavBtn icon="down" label="下移" wide="w-[22px]" />
          <Sep />
          <Tool icon="insert" text="插入" off /><Tool icon="del" text="删除" off /><Tool icon="scale" text="缩尺配筋" />
          <Tool icon="info" text="钢筋信息" /><Tool icon="lib" text="钢筋图库" /><Tool icon="other" text="其他" menu />
          <button type="button" className="px-[5px]">关闭</button>
          <Sep />
          <span className="pl-1">单构件钢筋总重(kg)：12.217</span>
        </div>
        <RebarTable />
        <div className="flex h-[9px] items-end border-l border-[#a9a9a9] bg-[#efefef]">
          <svg width="19" height="7" aria-hidden="true" className="shrink-0"><path d="M6 4l4-3v6z" fill="#222" /></svg>
          <div className="flex h-2 w-[64%] items-center justify-center gap-[1px] border border-b-0 border-[#999] bg-linear-to-b from-[#f6f6f6] to-[#e2e2e2]">
            <span className="h-1 w-[2px] bg-[#777]" /><span className="h-1 w-[2px] bg-[#777]" /><span className="h-1 w-[2px] bg-[#777]" />
          </div>
          <svg width="10" height="7" aria-hidden="true" className="ml-auto"><path d="M2 1v6l4-3z" fill="#222" /></svg>
        </div>
      </div>
    </section>
  );
}

const pill = "flex h-[17px] items-center justify-center rounded-full border border-[#7fbfea] bg-linear-to-b from-[#d4eefe] to-[#a6dafa] ";

function FloatingInput() {
  return (
    <div className="absolute top-[52px] right-[6px] h-[68px] w-[302px]">
      <svg width="302" height="68" viewBox="1094 52 302 68" aria-hidden="true" className="absolute inset-0">
        <circle cx="1301" cy="84" r="30" fill="#26333d" /><path d="M1303 56a28 28 0 0119 8" fill="none" stroke="#f08a1c" strokeWidth="2" />
        <circle cx="1366" cy="88" r="30" fill="#3b4852" /><path d="M1366 62a26 26 0 0116 6" fill="none" stroke="#35c8b0" strokeWidth="2" />
        <path d="M1354 114a28 28 0 0024 0" fill="none" stroke="#c8d050" strokeWidth="2" />
      </svg>
      <div className="absolute inset-x-0 top-[13px] h-[48px] border border-[#6db5e8] bg-[#dff3ff] p-[1px] shadow-sm">
        <svg viewBox="0 0 298 44" preserveAspectRatio="none" className="h-full w-full" aria-hidden="true">
          <defs>
            <linearGradient id="sky" x1="0" y1="0" x2="0" y2="1"><stop offset="0" stopColor="#c4e8ff" /><stop offset="1" stopColor="#8fd2fb" /></linearGradient>
            <linearGradient id="pane" x1="0" y1="0" x2="0" y2="1"><stop offset="0" stopColor="#fff" /><stop offset="1" stopColor="#f2faff" /></linearGradient>
          </defs>
          <rect width="298" height="44" fill="url(#pane)" />
          <path d="M122 0h176v21H150c-12 0-12-19-28-21z" fill="url(#sky)" />
          <path d="M0 .5h122c16 2 16 20.500 28 20.500h148" fill="none" stroke="#6db5e8" strokeWidth="1.500" />
          <path d="M4 22h130" stroke="#cbe7f8" /><rect x=".5" y=".5" width="297" height="43" fill="none" stroke="#8cc8f0" />
        </svg>
      </div>
      <div className="absolute top-[15px] right-1 flex text-[#0f7cc8]">
        <button type="button" className={pill + "mr-[11px] w-[67px] gap-1"}>荣爱堂<span className="text-[#5aa0cc]"><Arrow /></span></button>
        <button type="button" className={pill + "w-[22px]"}>词</button>
        <button type="button" aria-label="换肤" className={pill + "w-[22px]"}>
          <svg width="11" height="11" viewBox="0 0 11 11" fill="none" stroke="#0f7cc8"><path d="M1 1h6v5H1zM4 4h6v6H4zM5 5l4 4" strokeWidth="1.300" /></svg>
        </button>
        <button type="button" aria-label="关闭输入条" className={pill + "w-[22px]"}>
          <svg width="9" height="9" viewBox="0 0 9 9"><path d="M1 1l7 7M8 1L1 8" stroke="#0f7cc8" strokeWidth="2.500" /></svg>
        </button>
      </div>
    </div>
  );
}

export default function App() {
  return (
    <div className="relative flex h-screen w-full flex-col overflow-hidden bg-[#f0f0f0] font-['Noto_Sans','Noto_Sans_CJK_SC',sans-serif] text-xs text-black">
      <TitleBar />
      <MenuBar />
      <MainTools />
      <div className="flex min-h-0 grow">
        <ComponentList />
        <div className="ml-[3px] flex min-w-0 grow flex-col">
          <div className="flex h-[86px] shrink-0 flex-col gap-[1px] overflow-hidden">
            <div className="flex">
              <Strip>
                <Grip />
                <Tool icon="grayBrush" text="删除" off /><Sep />
                <Tool icon="copyG" text="复制" off /><Tool icon="mirror" text="镜像" off /><Sep />
                <Tool icon="move" text="移动" off /><Tool icon="rotate" text="旋转" off /><Sep />
                <Tool icon="extend" text="延伸" off /><Tool icon="trim" text="修剪" off /><Sep />
                <Tool icon="split1" text="打断" off /><Tool icon="merge" text="合并" off /><Tool icon="divide" text="分割" off /><Sep />
                <Tool icon="align" text="对齐" off menu /><Tool icon="offset" text="偏移" off /><Tool icon="stretch" text="拉伸" off /><Sep />
                <Tool icon="grip" text="设置夹点" off />
              </Strip>
            </div>
            <div className="flex gap-[1px]">
              <Strip>
                <Grip />
                <Combo label="楼层" value="基础层" wide="w-[59px]" />
                <Combo label="构件类型" value="基础" /><Combo label="构件种类" value="条形基础" /><Combo label="构件" value="TJ-1" /><Combo label="范围" value="整体" />
                <Sep />
                <Tool icon="prop" text="属性" /><Tool icon="editBar" text="编辑钢筋" on /><Tool icon="list" text="构件列表" on /><Tool icon="picker" text="拾取构件" />
              </Strip>
              <Strip>
                <Grip />
                <Tool icon="twoPt" text="两点" /><Tool icon="para" text="平行" /><Tool icon="angle" text="点角" split />
                <Tool icon="three" text="三点辅轴" split /><Tool icon="brush2" text="删除辅轴" /><Tool icon="dim" text="长度标注" split />
              </Strip>
              <Strip><Grip /><span className="w-4" /></Strip>
            </div>
            <div className="flex">
              <Strip>
                <Grip />
                <Tool icon="cursor" text="选择" split /><Sep />
                <Tool icon="line" text="直线" /><Tool icon="ptLen" text="点加长度" /><Tool icon="arc" text="三点画弧" split />
                <Combo label="弧参数" value="" wide="w-14" />
                <Tool icon="rect" text="矩形" /><Sep />
                <Tool icon="smart" text="智能布置" menu />
              </Strip>
            </div>
          </div>
          <Viewport />
          <SnapBar />
          <DataPanel />
        </div>
      </div>
      <FloatingInput />
    </div>
  );
}
